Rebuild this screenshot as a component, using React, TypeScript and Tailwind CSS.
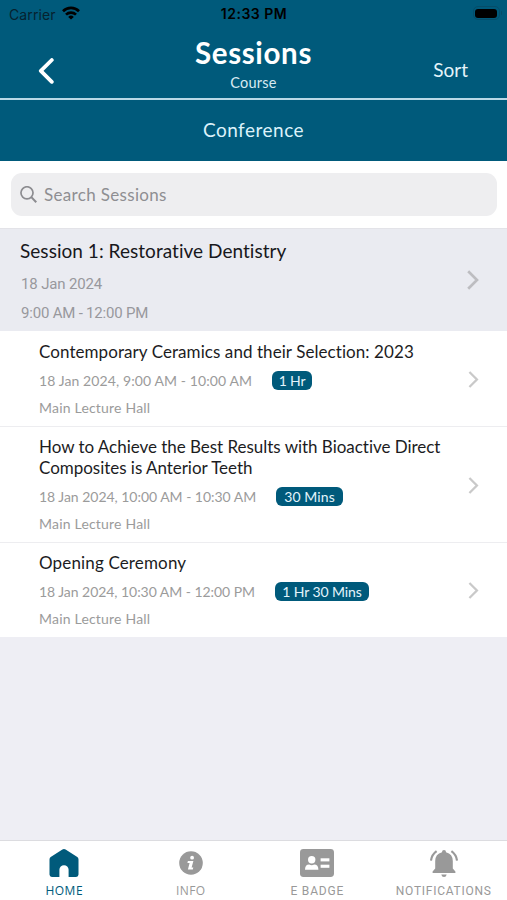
import { useState } from "react";
import clsx from "clsx";

type TabId = "home" | "info" | "badge" | "notifications";

const talks = [
  {
    title: ["Contemporary Ceramics and their Selection: 2023"],
    time: "18 Jan 2024, 9:00 AM - 10:00 AM",
    duration: "1 Hr",
    hall: "Main Lecture Hall",
    height: "h-[96px] pt-[10px]",
    titleSpacing: "tracking-[0.07px]",
    timeWidth: "w-[233px] tracking-[0.1px]",
    pillWidth: "w-[40px] tracking-[-0.2px]",
  },
  {
    title: ["How to Achieve the Best Results with Bioactive Direct", "Composites is Anterior Teeth"],
    time: "18 Jan 2024, 10:00 AM - 10:30 AM",
    duration: "30 Mins",
    hall: "Main Lecture Hall",
    height: "h-[116px] pt-[9px]",
    titleSpacing: "tracking-[-0.03px]",
    timeWidth: "w-[237px] tracking-[-0.03px]",
    pillWidth: "w-[67px] tracking-[0.1px]",
  },
  {
    title: ["Opening Ceremony"],
    time: "18 Jan 2024, 10:30 AM - 12:00 PM",
    duration: "1 Hr 30 Mins",
    hall: "Main Lecture Hall",
    height: "h-[94px] pt-[9px]",
    titleSpacing: "tracking-[0.15px]",
    timeWidth: "w-[236px] tracking-[-0.05px]",
    pillWidth: "w-[94px] tracking-[-0.1px]",
  },
];

function Chevron({ className }: { className: string }) {
  return (
    <svg viewBox="0 0 12 20" className={className} fill="none" stroke="currentColor" strokeWidth="2.7">
      <path d="M1.2 1.2 L10 10 L1.2 18.8" />
    </svg>
  );
}

function StatusBar() {
  return (
    <div className="flex items-center justify-between h-7 pl-[9px] pr-[8px] font-['Inter'] text-[14px] text-black">
      <div className="w-[120px] flex items-center gap-[6px]">
        <span className="text-[#06222f] tracking-[0.1px]">Carrier</span>
        <svg viewBox="0 0 18 14" className="w-[18px] h-[14px] -mt-[2px]" fill="none" stroke="currentColor" strokeWidth="2.7">
          <path d="M1 5.2 A11.5 11.5 0 0 1 17 5.2" />
          <path d="M4 8.6 A7.2 7.2 0 0 1 14 8.6" />
          <path d="M9 13.6 L6.2 10.9 A4 4 0 0 1 11.8 10.9 Z" fill="currentColor" stroke="none" />
        </svg>
      </div>
      <div className="-mt-px text-center font-semibold tracking-[0.5px] whitespace-nowrap">12:33 PM</div>
      <div className="w-[120px] flex justify-end items-center gap-px -mt-[2px]">
        <div className="w-[27px] h-[14px] rounded-[5px] border border-[#064d69] p-[1.5px]">
          <div className="h-full rounded-[3px] bg-black" />
        </div>
        <div className="w-[1.5px] h-1 rounded-r bg-[#064d69] -mr-[3px]" />
      </div>
    </div>
  );
}

function Header() {
  return (
    <header className="bg-[#005a7b] text-white">
      <StatusBar />
      <div className="grid grid-cols-3 h-[70px]">
        <button className="flex items-center pl-[38px] pt-[15px]">
          <svg viewBox="0 0 16 26" className="w-4 h-[26px]" fill="none" stroke="currentColor" strokeWidth="3.8" strokeLinecap="round" strokeLinejoin="round">
            <path d="M13.8 2 L2.8 12.8 L13.8 23.8" />
          </svg>
        </button>
        <div className="flex flex-col items-center pt-[9px]">
          <h1 className="text-[29.5px] leading-8 font-bold tracking-[0.65px] whitespace-nowrap">Sessions</h1>
          <p className="text-[14.5px] leading-5 mt-[4px] tracking-[0.25px] text-[#d9eaf2]">Course</p>
        </div>
        <button className="text-right pr-[39px] pt-[15px] text-[19px] text-[#e5f4fa]">Sort</button>
      </div>
      <div className="h-[63px] border-t-2 border-[#b9d8e6] flex items-center justify-center pb-px text-[19px] tracking-[0.5px] text-[#dcf2fa]">
        Conference
      </div>
    </header>
  );
}

function SearchBar() {
  return (
    <div className="h-[68px] pt-3 px-[11px] bg-white border-b border-[#e3e3e8]">
      <div className="h-[43px] mr-[-1px] rounded-[11px] bg-[#eeeef0] flex items-center pl-[9px] gap-[7px]">
        <svg viewBox="0 0 18 18" className="w-[17px] h-[17px] text-[#8c8c90]" fill="none" stroke="currentColor" strokeWidth="1.8">
          <circle cx="7.4" cy="7.2" r="6.4" />
          <path d="M12 11.8 L17.2 17.2" strokeWidth="2.2" />
        </svg>
        <span className="text-[17px] tracking-[0.33px] text-[#8e8e92]">Search Sessions</span>
      </div>
    </div>
  );
}

function SessionHeader() {
  return (
    <div className="h-[102px] flex items-center justify-between bg-[#eaebf1] pl-[21px] pr-7">
      <div className="h-full pt-[9px]">
        <h2 className="text-[19px] leading-[26px] -ml-px tracking-[0.04px] text-[#18181c]">Session 1: Restorative Dentistry</h2>
        <p className="mt-[10px] font-['Roboto'] text-[15px] leading-5 tracking-[-0.15px] text-[#98989d]">18 Jan 2024</p>
        <p className="mt-[9px] font-['Roboto'] text-[15px] leading-5 tracking-[-0.2px] text-[#98989d]">9:00 AM - 12:00 PM</p>
      </div>
      <Chevron className="w-3 h-5 text-[#bdbdc1]" />
    </div>
  );
}

function TalkRow({ talk }: { talk: (typeof talks)[number] }) {
  return (
    <div className={clsx("flex items-start justify-between bg-white border-b border-[#ededf0] last:border-b-0 pl-[39px] pr-[28px]", talk.height)}>
      <div>
        <h3 className={clsx("text-[17px] leading-[21px] text-[#1c1c1e] whitespace-nowrap", talk.titleSpacing)}>
          {talk.title.map((line) => (
            <span key={line} className="block">{line}</span>
          ))}
        </h3>
        <div className="mt-[9px] h-[19px] flex items-center">
          <span className={clsx("text-[14px] leading-[19px] text-[#9b9b9b] whitespace-nowrap", talk.timeWidth)}>{talk.time}</span>
          <span className={clsx("h-[19px] rounded-[6px] bg-[#005a7b] text-center text-[14px] leading-[19px] text-[#e3f4fb] whitespace-nowrap", talk.pillWidth)}>
            {talk.duration}
          </span>
        </div>
        <p className="mt-2 text-[14px] leading-[19px] tracking-[0.2px] text-[#9b9b9b]">{talk.hall}</p>
      </div>
      <Chevron className="w-[11px] h-[17px] self-center -mt-[8px] text-[#c9c9c9]" />
    </div>
  );
}

function HomeIcon() {
  return (
    <svg viewBox="0 0 30 28" className="w-[30px] h-7" fill="currentColor">
      <path d="M13.4 .5 Q15 -.4 16.6 .5 L28.3 8 Q29.5 8.9 29.5 10.4 V25.6 Q29.5 28 27.1 28 H19.6 V20.8 A4.6 4.6 0 0 0 10.4 20.8 V28 H2.9 Q.5 28 .5 25.6 V10.4 Q.5 8.9 1.7 8 Z" />
    </svg>
  );
}

function InfoIcon() {
  return (
    <svg viewBox="0 0 24 24" className="w-6 h-6">
      <circle cx="12" cy="12" r="11.8" fill="currentColor" />
      <circle cx="13.1" cy="6.7" r="1.9" fill="white" />
      <path d="M8.9 10.1 H14.4 L12.6 16.6 H14.3 L13.8 18.5 H8.9 L10.6 12 H8.4 Z" fill="white" />
    </svg>
  );
}

function BadgeIcon() {
  return (
    <svg viewBox="0 0 34 28" className="w-[34px] h-7">
      <rect width="34" height="28" rx="3.4" fill="currentColor" />
      <g fill="white">
        <circle cx="11.7" cy="10.8" r="3.7" />
        <path d="M5 20.8 Q5 15.6 9.2 15.6 Q11.7 16.7 14.2 15.6 Q18.4 15.6 18.4 20.8 Z" />
        <rect x="20.6" y="9.3" width="8.8" height="3.1" />
        <rect x="20.6" y="15.7" width="8.8" height="3.1" />
      </g>
    </svg>
  );
}

function BellIcon() {
  return (
    <svg viewBox="0 0 28 27" className="w-7 h-[27px]" fill="currentColor">
      <path d="M14 0 A2 2 0 0 1 16 2 V2.2 Q22.8 4 22.8 11 V18.5 L25.4 21.5 V23 H2.6 V21.5 L5.2 18.5 V11 Q5.2 4 12 2.2 V2 A2 2 0 0 1 14 0 Z" />
      <path d="M11.3 24.5 H16.7 Q16.2 27 14 27 Q11.8 27 11.3 24.5 Z" />
      <path d="M6.6 1.2 Q1.6 4.9 1 10.6 M21.4 1.2 Q26.4 4.9 27 10.6" fill="none" stroke="currentColor" strokeWidth="2.1" />
    </svg>
  );
}

function TabBar() {
  const [activeTab, setActiveTab] = useState<TabId>("home");

  const tabs: { id: TabId; label: string; icon: React.ReactNode; font: string }[] = [
    { id: "home", label: "HOME", icon: <HomeIcon />, font: "font-['Open_Sans'] font-medium text-[12px] tracking-[0.5px]" },
    { id: "info", label: "INFO", icon: <InfoIcon />, font: "font-['Open_Sans'] text-[12px] tracking-[0.4px]" },
    { id: "badge", label: "E BADGE", icon: <BadgeIcon />, font: "font-['Roboto'] text-[12px] tracking-[0.8px]" },
    { id: "notifications", label: "NOTIFICATIONS", icon: <BellIcon />, font: "font-['Roboto'] text-[12px] tracking-[0.75px]" },
  ];

  return (
    <nav className="h-[60px] pl-px grid grid-cols-4 bg-white border-t border-[#dcdce0]">
      {tabs.map((tab) => (
        <button
          key={tab.id}
          onClick={() => setActiveTab(tab.id)}
          className={clsx("flex flex-col items-center pt-2", activeTab === tab.id ? "text-[#005a7b]" : "text-[#999999]")}
        >
          <span className="h-7 flex items-center">{tab.icon}</span>
          <span className={clsx("mt-[6px] leading-4 whitespace-nowrap", tab.font)}>{tab.label}</span>
        </button>
      ))}
    </nav>
  );
}

export default function App() {
  return (
    <div className="w-full h-[900px] flex flex-col overflow-hidden bg-[#eeeef4] font-['Lato',sans-serif] [font-variant-ligatures:none]">
      <Header />
      <SearchBar />
      <SessionHeader />
      <main className="flex-1">
        {talks.map((talk) => (
          <TalkRow key={talk.title[0]} talk={talk} />
        ))}
      </main>
      <TabBar />
    </div>
  );
}
